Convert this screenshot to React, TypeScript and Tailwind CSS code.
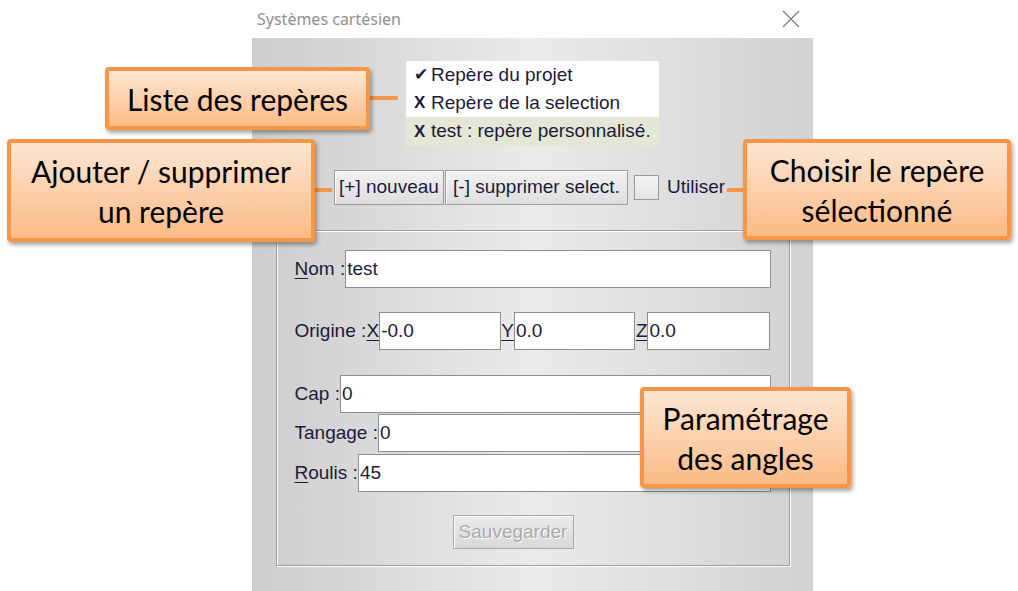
import { ReactNode } from "react";

const ui = { fontFamily: '"Liberation Sans", Arial, sans-serif' };
const note = { fontFamily: 'Lato, "Open Sans", sans-serif' };

function Field({ value, className }: { value: string; className: string }) {
  return (
    <div
      className={`h-[38px] bg-white border border-[#8e8e8e] flex items-center pl-[1px] text-[19px] text-[#1b1b3a] ${className}`}
    >
      {value}
    </div>
  );
}

function Key({ k, rest }: { k: string; rest?: string }) {
  return (
    <span className="whitespace-pre">
      <span className="underline underline-offset-[3px] decoration-1">{k}</span>
      {rest}
    </span>
  );
}

function Callout({ className, children }: { className: string; children: ReactNode }) {
  return (
    <div
      style={note}
      className={`absolute border-[4px] border-[#f79646] rounded-[4px] bg-gradient-to-b from-[#fde6d3] to-[#fbbb86] shadow-[2px_3px_4px_rgba(0,0,0,0.35)] flex flex-col items-center justify-center text-[30px] leading-[40px] text-black ${className}`}
    >
      {children}
    </div>
  );
}

export default function App() {
  return (
    <div className="relative w-[1018px] h-[591px] bg-white overflow-hidden flex" style={ui}>
      {/* dialog */}
      <div className="ml-[252px] w-[561px] h-full flex flex-col">
        <div className="h-[38px] flex items-center justify-between pl-[5px] pr-[13px]">
          <span style={{ fontFamily: '"Noto Sans", sans-serif' }} className="text-[16px] text-[#8f8f8f]">
            Systèmes cartésien
          </span>
          <svg width="18" height="18" viewBox="0 0 18 18" className="mb-[1px]">
            <path d="M1 1 L17 17 M17 1 L1 17" stroke="#7a7a7a" strokeWidth="1.2" />
          </svg>
        </div>

        <div className="flex-1 flex flex-col items-center pt-[23px] bg-gradient-to-r from-[#cdcdcd] via-[#ebebeb] to-[#d2d2d2] text-[19px] text-[#1b1b3a]">
          {/* list */}
          <div className="w-[253px] h-[85px] bg-white flex flex-col">
            <div className="h-[28px] flex items-center pl-[8px]">
              <span style={{ fontFamily: '"DejaVu Sans", sans-serif' }} className="w-[17px] text-[17px] font-bold">
                ✔
              </span>
              Repère du projet
            </div>
            <div className="h-[28px] flex items-center pl-[8px]">
              <span className="w-[17px] font-bold text-[17px]">X</span>
              Repère de la selection
            </div>
            <div className="h-[29px] flex items-center pl-[8px] bg-[#e4e7d5]">
              <span className="w-[17px] font-bold text-[17px]">X</span>
              test : repère personnalisé.
            </div>
          </div>

          {/* actions */}
          <div className="mt-[24px] flex items-center mr-[6px]">
            <button className="w-[110px] h-[35px] border border-[#9a9a9a] shadow-[inset_1px_1px_0_#fff] bg-gradient-to-b from-[#f2f2f2] to-[#dedede] flex items-center justify-center">
              [+] nouveau
            </button>
            <button className="ml-[1px] w-[183px] h-[35px] border border-[#9a9a9a] shadow-[inset_1px_1px_0_#fff] bg-gradient-to-b from-[#f2f2f2] to-[#dedede] flex items-center justify-center">
              [-] supprimer select.
            </button>
            <div className="ml-[6px] w-[25px] h-[25px] border border-[#9a9a9a] bg-gradient-to-b from-[#f4f4f4] to-[#e4e4e4]" />
            <span className="ml-[8px]">Utiliser</span>
          </div>

          {/* form group */}
          <div className="mt-[25px] w-[514px] h-[336px] border border-[#9d9d9d] shadow-[inset_1px_1px_0_#fff,1px_1px_0_#fff] flex flex-col px-[18px] pt-[19px]">
            <div className="flex items-center">
              <Key k="N" rest="om :" />
              <Field value="test" className="flex-1" />
            </div>
            <div className="mt-[24px] flex items-center">
              <span className="w-[72px] whitespace-pre">Origine :</span>
              <Key k="X" />
              <Field value="-0.0" className="w-[122px]" />
              <Key k="Y" />
              <Field value="0.0" className="w-[121px]" />
              <span className="ml-[1px]">
                <Key k="Z" />
              </span>
              <Field value="0.0" className="flex-1 mr-[1px]" />
            </div>
            <div className="mt-[25px] flex items-center">
              <span className="whitespace-pre">Cap :</span>
              <Field value="0" className="flex-1" />
            </div>
            <div className="mt-[1px] flex items-center">
              <span className="whitespace-pre">Tangage :</span>
              <Field value="0" className="flex-1" />
            </div>
            <div className="mt-[2px] flex items-center">
              <Key k="R" rest="oulis :" />
              <Field value="45" className="flex-1" />
            </div>
            <button className="mt-[23px] ml-[158px] w-[121px] h-[34px] border border-[#a8a8a8] shadow-[inset_1px_1px_0_#fff] bg-gradient-to-b from-[#ececec] to-[#d8d8d8] text-[#a9a9a9] [text-shadow:1px_1px_0_#fff] flex items-center justify-center">
              Sauvegarder
            </button>
          </div>
        </div>
      </div>

      {/* annotations */}
      <div className="absolute left-[370px] top-[96px] w-[28px] h-[4px] bg-[#f79646]" />
      <div className="absolute left-[315px] top-[188px] w-[17px] h-[4px] bg-[#f79646]" />
      <div className="absolute left-[727px] top-[188px] w-[16px] h-[4px] bg-[#f79646]" />

      <Callout className="left-[105px] top-[67px] w-[265px] h-[63px]">
        <span>Liste des repères</span>
      </Callout>
      <Callout className="left-[7px] top-[139px] w-[308px] h-[103px]">
        <span>Ajouter / supprimer</span>
        <span>un repère</span>
      </Callout>
      <Callout className="left-[743px] top-[139px] w-[268px] h-[101px]">
        <span>Choisir le repère</span>
        <span>sélectionné</span>
      </Callout>
      <Callout className="left-[640px] top-[387px] w-[211px] h-[101px]">
        <span>Paramétrage</span>
        <span>des angles</span>
      </Callout>
    </div>
  );
}
